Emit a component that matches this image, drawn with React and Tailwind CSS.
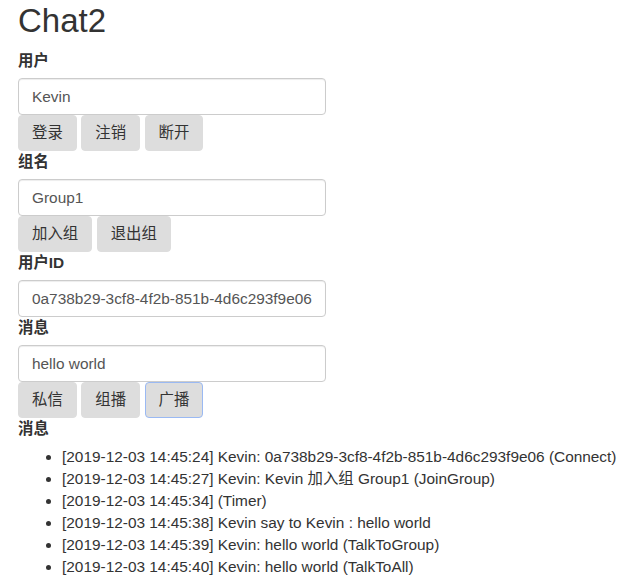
import { useState } from "react";

const messages = [
  "[2019-12-03 14:45:24] Kevin: 0a738b29-3cf8-4f2b-851b-4d6c293f9e06 (Connect)",
  "[2019-12-03 14:45:27] Kevin: Kevin 加入组 Group1 (JoinGroup)",
  "[2019-12-03 14:45:34] (Timer)",
  "[2019-12-03 14:45:38] Kevin say to Kevin : hello world",
  "[2019-12-03 14:45:39] Kevin: hello world (TalkToGroup)",
  "[2019-12-03 14:45:40] Kevin: hello world (TalkToAll)",
];

function Field({ label, value }) {
  return (
    <>
      <label className="mb-[6px] block font-bold leading-[22px]">{label}</label>
      {value !== undefined && (
        <input
          defaultValue={value}
          className="block h-[37px] w-[308px] rounded-[4px] border border-[#ccc] px-[13px] text-[#555] shadow-[inset_0_1px_1px_rgba(0,0,0,0.075)] focus:outline-none"
        />
      )}
    </>
  );
}

function Buttons({ items, focused }) {
  return (
    <div className="flex gap-[4.5px]">
      {items.map((b) => (
        <button
          key={b}
          className={`h-[36px] rounded-[4px] border bg-[#ddd] px-[13px] text-[#333] ${
            b === focused ? "border-[#9ab9f3]" : "border-[#ddd]"
          }`}
        >
          {b}
        </button>
      ))}
    </div>
  );
}

export default function App() {
  const [log] = useState(messages);

  return (
    <div className="px-[18px] font-['Liberation_Sans','Noto_Sans_CJK_SC',sans-serif] text-[15.4px] leading-[22px] text-[#333]">
      <h2 className="mt-[3px] mb-[11px] text-[33px] font-normal leading-[36px]">Chat2</h2>
      <Field label="用户" value="Kevin" />
      <Buttons items={["登录", "注销", "断开"]} />
      <Field label="组名" value="Group1" />
      <Buttons items={["加入组", "退出组"]} />
      <Field label="用户ID" value="0a738b29-3cf8-4f2b-851b-4d6c293f9e06" />
      <Field label="消息" value="hello world" />
      <Buttons items={["私信", "组播", "广播"]} focused="广播" />
      <Field label="消息" />
      <ul className="list-disc pl-[44px]">
        {log.map((m) => (
          <li key={m}>{m}</li>
        ))}
      </ul>
    </div>
  );
}
